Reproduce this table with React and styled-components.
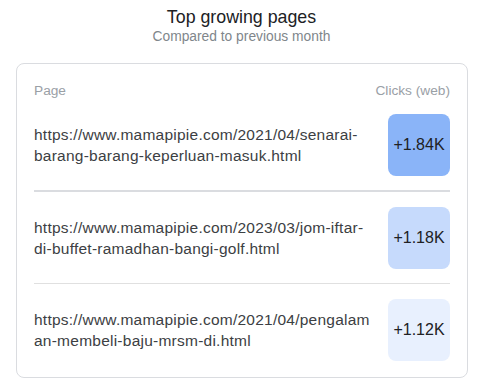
import React from "react";
import styled, { createGlobalStyle } from "styled-components";

const GlobalStyle = createGlobalStyle`
  html, body {
    margin: 0;
    padding: 0;
    background: #ffffff;
  }
  body {
    font-family: "Liberation Sans", Arial, sans-serif;
  }
`;

// styled component
const Wrapper = styled.div`
  width: 483px;
  padding-top: 6px;
  box-sizing: border-box;
`;

const Heading = styled.div`
  display: flex;
  flex-direction: column;
  align-items: center;
`;

const Title = styled.span`
  font-size: 17.8px;
  line-height: 22px;
  color: #202124;
`;

const Subtitle = styled.span`
  font-size: 13.8px;
  line-height: 16px;
  color: #80868b;
  margin-top: 1px;
`;

const Card = styled.section`
  margin: 18px 15px 0 16px;
  border: 1px solid #dadce0;
  border-radius: 8px;
  padding: 0 17px;
`;

const HeaderRow = styled.div`
  display: flex;
  justify-content: space-between;
  padding-top: 19px;
  height: 31px;
  font-size: 13.7px;
  line-height: 15px;
  color: #9aa0a6;
`;

const Row = styled.div`
  display: flex;
  align-items: center;
  justify-content: space-between;
  padding: ${(props) => props.pad};
  border-bottom: ${(props) => props.divider};
`;

const Url = styled.span`
  width: 345px;
  font-size: 15.5px;
  letter-spacing: 0.24px;
  line-height: 21px;
  color: #3c4043;
  white-space: nowrap;
`;

const Badge = styled.div`
  width: 62px;
  height: 62px;
  border-radius: 8px;
  background: ${(props) => props.bg};
  display: flex;
  align-items: center;
  justify-content: center;
  font-size: 16px;
  color: #202124;
`;

const rows = [
  {
    lines: [
      "https://www.mamapipie.com/2021/04/senarai-",
      "barang-barang-keperluan-masuk.html",
    ],
    clicks: "+1.84K",
    bg: "#8ab4f8",
    pad: "0 0 14px",
    divider: "2px solid #dadce0",
  },
  {
    lines: [
      "https://www.mamapipie.com/2023/03/jom-iftar-",
      "di-buffet-ramadhan-bangi-golf.html",
    ],
    clicks: "+1.18K",
    bg: "#c6dafc",
    pad: "15px 0 14px",
    divider: "1px solid #e0e0e0",
  },
  {
    lines: [
      "https://www.mamapipie.com/2021/04/pengalam",
      "an-membeli-baju-mrsm-di.html",
    ],
    clicks: "+1.12K",
    bg: "#e8f0fe",
    pad: "15px 0 16px",
    divider: "none",
  },
];

const App = () => {
  return (
    <Wrapper>
      <GlobalStyle />
      <Heading>
        <Title>Top growing pages</Title>
        <Subtitle>Compared to previous month</Subtitle>
      </Heading>
      <Card>
        <HeaderRow>
          <span>Page</span>
          <span>Clicks (web)</span>
        </HeaderRow>
        {rows.map((row) => (
          <Row key={row.clicks} pad={row.pad} divider={row.divider}>
            <Url>
              {row.lines[0]}
              <br />
              {row.lines[1]}
            </Url>
            <Badge bg={row.bg}>{row.clicks}</Badge>
          </Row>
        ))}
      </Card>
    </Wrapper>
  );
};

export default App;
